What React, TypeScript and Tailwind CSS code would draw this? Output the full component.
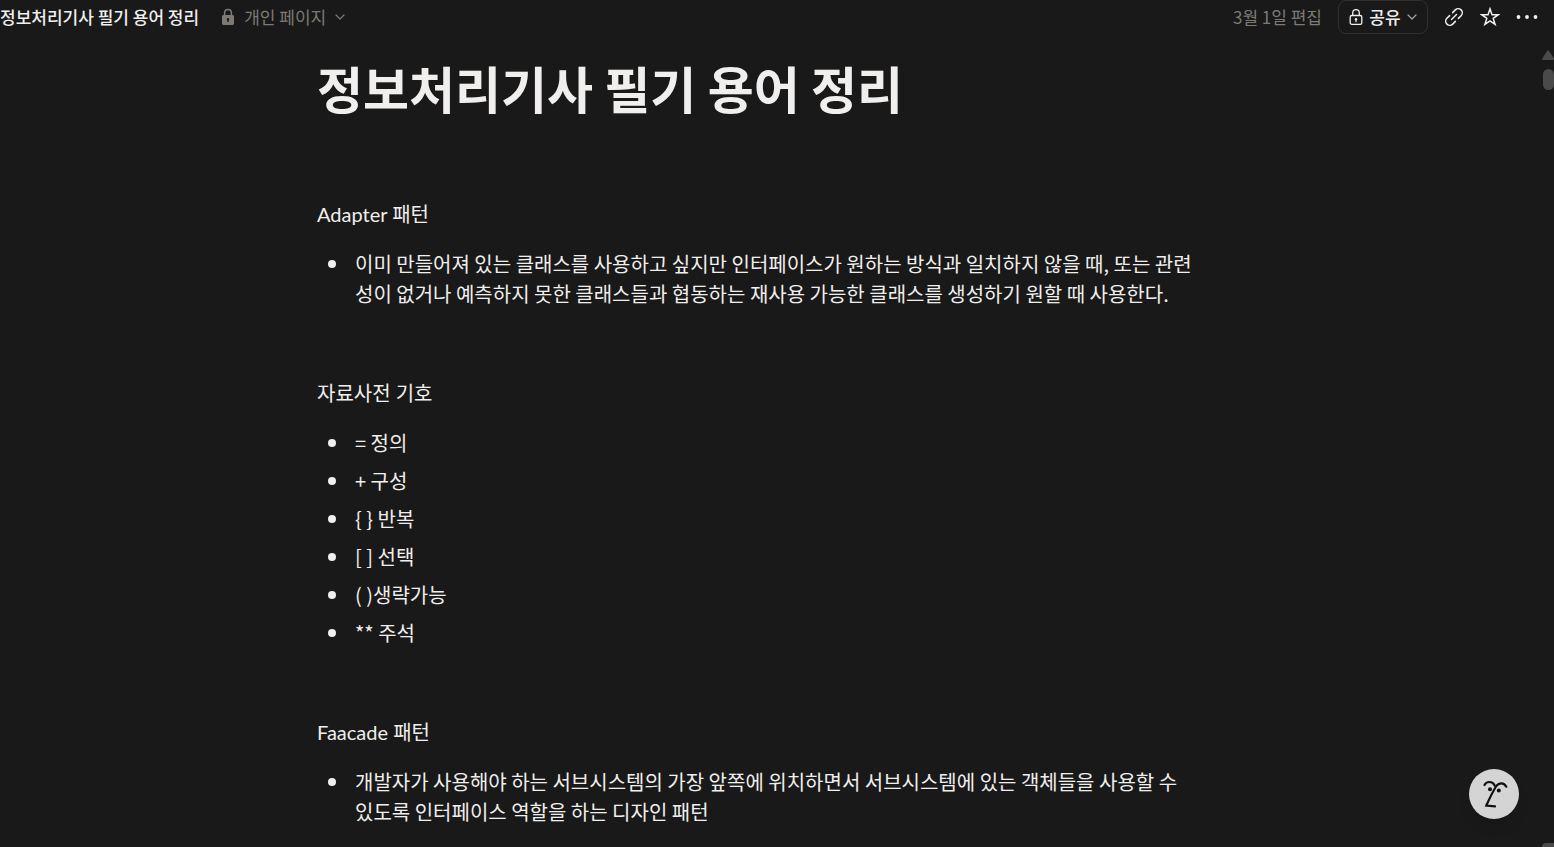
import * as React from "react";

interface Section {
  heading: string;
  items: string[];
}

const TITLE = "정보처리기사 필기 용어 정리";

const sections: Section[] = [
  {
    heading: "Adapter 패턴",
    items: [
      "이미 만들어져 있는 클래스를 사용하고 싶지만 인터페이스가 원하는 방식과 일치하지 않을 때, 또는 관련성이 없거나 예측하지 못한 클래스들과 협동하는 재사용 가능한 클래스를 생성하기 원할 때 사용한다.",
    ],
  },
  {
    heading: "자료사전 기호",
    items: ["= 정의", "+ 구성", "{ } 반복", "[ ] 선택", "( )생략가능", "** 주석"],
  },
  {
    heading: "Faacade 패턴",
    items: [
      "개발자가 사용해야 하는 서브시스템의 가장 앞쪽에 위치하면서 서브시스템에 있는 객체들을 사용할 수 있도록 인터페이스 역할을 하는 디자인 패턴",
    ],
  },
];

function LockFilled() {
  return (
    <svg viewBox="0 0 14 18" className="h-[18px] w-[14px]" aria-hidden="true">
      <path
        d="M3.6 8V5.2C3.6 3.1 5 1.6 7 1.6s3.4 1.5 3.4 3.6V8"
        fill="none"
        stroke="currentColor"
        strokeWidth="1.5"
      />
      <path
        fillRule="evenodd"
        fill="currentColor"
        d="M2.8 7h8.4C12.4 7 13 7.6 13 8.8v6.4c0 1.2-.6 1.8-1.8 1.8H2.8C1.6 17 1 16.4 1 15.2V8.8C1 7.6 1.6 7 2.8 7ZM7 10a1.3 1.3 0 0 0-.7 2.4V14h1.4v-1.6A1.3 1.3 0 0 0 7 10Z"
      />
    </svg>
  );
}

function LockOutline() {
  return (
    <svg viewBox="0 0 14 18" className="h-[18px] w-[14px]" fill="none" stroke="currentColor" aria-hidden="true">
      <path d="M3.7 7.5V5C3.7 3 5 1.6 7 1.6S10.3 3 10.3 5v2.5" strokeWidth="1.3" />
      <rect x="1.2" y="7.5" width="11.6" height="8.8" rx="1.6" strokeWidth="1.3" />
      <circle cx="7" cy="11.2" r="1.2" fill="currentColor" stroke="none" />
      <path d="M7 11.5v2.2" strokeWidth="1.2" strokeLinecap="round" />
    </svg>
  );
}

function Chevron() {
  return (
    <svg
      viewBox="0 0 10 10"
      className="size-[10px]"
      fill="none"
      stroke="currentColor"
      strokeWidth="1.2"
      strokeLinecap="round"
      strokeLinejoin="round"
      aria-hidden="true"
    >
      <path d="M1 3l4 4 4-4" />
    </svg>
  );
}

function LinkIcon() {
  return (
    <svg
      viewBox="0 0 20 20"
      className="size-5"
      fill="none"
      stroke="currentColor"
      strokeWidth="1.5"
      strokeLinecap="round"
      aria-hidden="true"
    >
      <path d="M8.6 5.6l2.7-2.7a4.1 4.1 0 0 1 5.8 5.8l-2.7 2.7" />
      <path d="M11.4 14.4l-2.7 2.7a4.1 4.1 0 0 1-5.8-5.8l2.7-2.7" />
      <path d="M7.5 12.5l5-5" />
    </svg>
  );
}

function StarIcon() {
  return (
    <svg viewBox="0 0 20 20" className="size-5" fill="none" stroke="currentColor" strokeWidth="1.5" aria-hidden="true">
      <path d="M10 1.8l2 5.9h6.3l-5.1 3.7 1.9 6L10 13.8l-5.1 3.6 1.9-6-5.1-3.700H8z" />
    </svg>
  );
}

function DotsIcon() {
  return (
    <svg viewBox="0 0 22 20" className="h-5 w-[22px]" fill="currentColor" aria-hidden="true">
      <circle cx="2.5" cy="10" r="1.9" />
      <circle cx="11" cy="10" r="1.9" />
      <circle cx="19.5" cy="10" r="1.9" />
    </svg>
  );
}

function FaceIcon() {
  return (
    <svg
      viewBox="0 0 50 50"
      className="size-full"
      fill="none"
      stroke="#111111"
      strokeWidth="2.2"
      aria-hidden="true"
    >
      <path d="M15.5 16C17.5 12 23.5 11.8 25.7 16.5" strokeLinecap="round" />
      <path d="M37.3 17.7C35 13.5 30 13 27 17.5C24.5 21.5 20.5 29.5 17.3 36.5l8.7.8" strokeLinecap="round" />
      <circle cx="21" cy="20.2" r="2" fill="#111111" stroke="none" />
      <circle cx="29.8" cy="21.4" r="2" fill="#111111" stroke="none" />
    </svg>
  );
}

function Topbar() {
  return (
    <header className="flex h-[34px] items-center justify-between pr-4 text-[17px] leading-6">
      <nav className="flex items-center gap-[22px]">
        <a href="#top" className="font-medium text-[#f0efed]">
          {TITLE}
        </a>
        <button type="button" className="flex items-center gap-[9px] text-[#7d7a75]">
          <LockFilled />
          개인 페이지
          <Chevron />
        </button>
      </nav>

      <div className="flex items-center gap-4 text-[#f0efed]">
        <span className="text-[#7d7a75]">3월 1일 편집</span>
        <button
          type="button"
          className="flex h-[34px] w-[90px] items-center justify-center gap-[6px] rounded-lg border border-[#31302f] font-medium"
        >
          <LockOutline />
          공유
          <span className="text-[#a5a29d]">
            <Chevron />
          </span>
        </button>
        <button type="button" aria-label="링크 복사">
          <LinkIcon />
        </button>
        <button type="button" aria-label="즐겨찾기">
          <StarIcon />
        </button>
        <button type="button" aria-label="더 보기">
          <DotsIcon />
        </button>
      </div>
    </header>
  );
}

function NoteSection({ heading, items }: Section) {
  return (
    <section>
      <p className="font-['Lato','Noto_Sans_CJK_KR',sans-serif]">{heading}</p>
      <ul className="mt-5 flex flex-col gap-2">
        {items.map((item) => (
          <li key={item} className="flex gap-2">
            <span className="flex h-[30px] w-[30px] shrink-0 items-center justify-center">
              <span className="size-2 rounded-full bg-[#f0efed]" />
            </span>
            <span>{item}</span>
          </li>
        ))}
      </ul>
    </section>
  );
}

export default function App() {
  return (
    <div
      id="top"
      className="relative min-h-screen overflow-hidden bg-[#191919] font-['Noto_Sans_CJK_KR',sans-serif] text-[#f0efed]"
    >
      <Topbar />

      <main className="px-4 pt-[23px] pb-4 lg:pr-[54px]">
        <article className="mx-auto max-w-[882px]">
          <h1 className="text-[50px] leading-[60px] font-bold">{TITLE}</h1>
          <div className="mt-[82px] flex flex-col gap-[69px] text-xl leading-[30px]">
            {sections.map((section) => (
              <NoteSection key={section.heading} {...section} />
            ))}
          </div>
        </article>
      </main>

      {/* Scroll track */}
      <div className="absolute top-[50px] right-0 bottom-0 flex w-3 flex-col items-center text-[#4a4a4a]" aria-hidden="true">
        <svg viewBox="0 0 12 10" className="h-[10px] w-3" fill="currentColor">
          <path d="M5.2.8q.8-1 1.6 0L12 8.5Q12 10 11 10H1Q-.2 10 .3 8.5Z" />
        </svg>
        <div className="mt-[9px] h-[21px] w-[11px] self-end rounded-full bg-[#4a4a4a]" />
        <div className="mt-auto h-1 w-3 rounded-tl bg-[#4a4a4a]" />
      </div>

      <button
        type="button"
        aria-label="AI"
        className="fixed right-[35px] bottom-7 size-[50px] rounded-full bg-[#d4d4d4] shadow-lg"
      >
        <FaceIcon />
      </button>
    </div>
  );
}
